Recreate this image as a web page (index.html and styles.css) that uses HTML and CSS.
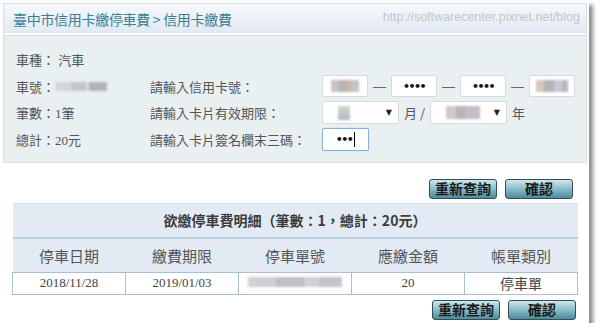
FILE: index.html
```html
<!DOCTYPE html>
<html>
    <head>
        <meta charset="utf-8">
        <title>信用卡繳費</title>
        <link rel="stylesheet" href="styles.css">
    </head>
    <body>
        <div class="shot">
            <div class="panel">
                <div class="panel-head">
                    <span class="crumb">臺中市信用卡繳停車費 &gt; 信用卡繳費</span>
                    <span class="mark">http://softwarecenter.pixnet.net/blog</span>
                </div>
                <div class="panel-body">
                    <div class="info">
                        <div class="cell">車種： 汽車</div>
                        <div class="cell"></div>
                        <div class="cell"></div>

                        <div class="cell">車號：<span class="blur blur-plate"></span></div>
                        <div class="cell">請輸入信用卡號：</div>
                        <div class="cell">
                            <span class="box"><span class="blur blur-a"></span></span>
                            <span class="dash">—</span>
                            <span class="box dots">••••</span>
                            <span class="dash">—</span>
                            <span class="box dots">••••</span>
                            <span class="dash">—</span>
                            <span class="box"><span class="blur blur-b"></span></span>
                        </div>

                        <div class="cell">筆數：1筆</div>
                        <div class="cell">請輸入卡片有效期限：</div>
                        <div class="cell">
                            <span class="sel"><span class="blur blur-m"></span><span class="arrow">▼</span></span>
                            <span class="unit">月 /</span>
                            <span class="sel"><span class="blur blur-y"></span><span class="arrow">▼</span></span>
                            <span class="unit">年</span>
                        </div>

                        <div class="cell">總計：20元</div>
                        <div class="cell">請輸入卡片簽名欄末三碼：</div>
                        <div class="cell">
                            <span class="box focus dots">•••<span class="caret"></span></span>
                        </div>
                    </div>
                </div>
            </div>

            <div class="actions top">
                <button class="btn">重新查詢</button>
                <button class="btn">確認</button>
            </div>

            <table class="bills">
                <tr class="title-row">
                    <th colspan="5">欲繳停車費明細（筆數：1，總計：20元）</th>
                </tr>
                <tr class="head-row">
                    <th>停車日期</th>
                    <th>繳費期限</th>
                    <th>停車單號</th>
                    <th>應繳金額</th>
                    <th>帳單類別</th>
                </tr>
                <tr class="data-row">
                    <td>2018/11/28</td>
                    <td>2019/01/03</td>
                    <td><span class="blur blur-no"></span></td>
                    <td>20</td>
                    <td class="kind">停車單</td>
                </tr>
            </table>

            <div class="actions bottom">
                <button class="btn">重新查詢</button>
                <button class="btn">確認</button>
            </div>
        </div>
    </body>
</html>
```
FILE: styles.css
```css
body {
    margin: 0;
    background: #fff;
    font-family: "Liberation Serif", "Noto Sans CJK TC", serif;
    color: #555;
}
.shot {
    width: 589px;
    height: 323px;
    padding: 3px 0 0 3px;
    box-sizing: border-box;
    background: #fff;
    box-shadow: 4px 5px 4px rgba(0, 0, 0, .45);
}
.panel {
    width: 584px;
    border: 1px solid #d9e0e3;
    box-sizing: border-box;
}
.panel-head {
    height: 29px;
    display: flex;
    justify-content: space-between;
    align-items: center;
    padding: 0 6px 0 9px;
    background: linear-gradient(#f7f9fb, #e0e9f2);
    border-bottom: 2px solid #fff;
}
.crumb {
    font-family: "Noto Sans CJK TC", sans-serif;
    font-size: 14px;
    color: #3a7f92;
    letter-spacing: -0.3px;
}
.mark {
    font-family: "Liberation Sans", sans-serif;
    font-size: 12.5px;
    color: #c2c6c9;
    margin-top: -4px;
}
.panel-body {
    background: #e9f0f2;
    border-top: 1px solid #d9e0e3;
    padding: 10px 0 9px 12px;
}
.info {
    display: grid;
    grid-template-columns: 134px 172px auto;
    grid-auto-rows: 26.7px;
    font-size: 13px;
}
.cell {
    display: flex;
    align-items: center;
    white-space: nowrap;
}
.blur {
    display: inline-block;
    height: 9px;
    filter: blur(1.2px);
}
.blur-plate {
    width: 52px;
    background: linear-gradient(90deg, #d6d6d8 0 30%, #c6c6ca 30% 60%, #ddd 60% 66%, #b4b4b8 66% 100%);
}
.blur-a {
    width: 28px;
    height: 12px;
    background: linear-gradient(90deg, #c8c2c4 0 30%, #b8b3b6 30% 55%, #c8b9ae 55% 75%, #c3c3ce 75%);
}
.blur-b {
    width: 32px;
    height: 12px;
    background: linear-gradient(90deg, #d6c6be 0 25%, #b5b1b8 25% 55%, #c8c8d2 55% 80%, #b8b8c0 80%);
}
.blur-m {
    width: 12px;
    height: 14px;
    background: linear-gradient(#cfd8c8, #b8b6c6);
}
.blur-y {
    width: 34px;
    height: 13px;
    background: linear-gradient(90deg, #d2c8c6 0 30%, #bcb2b8 30% 60%, #c4bcc8 60%);
}
.blur-no {
    width: 94px;
    height: 10px;
    background: linear-gradient(90deg, #d0d0d2 0 30%, #c0c0c4 30% 60%, #d2d2d4 60% 75%, #c4c4c8 75%);
}
.box {
    width: 46px;
    height: 22px;
    box-sizing: border-box;
    background: #fff;
    border: 1px solid #d6dadc;
    border-radius: 2px;
    display: inline-flex;
    align-items: center;
    justify-content: center;
}
.dots {
    font-family: "DejaVu Sans", sans-serif;
    font-size: 11px;
    font-weight: bold;
    color: #111;
    letter-spacing: -1.5px;
}
.dash {
    width: 23px;
    text-align: center;
    color: #666;
    font-family: "Liberation Sans", sans-serif;
    font-size: 13px;
}
.sel {
    width: 77px;
    height: 23px;
    box-sizing: border-box;
    background: #fff;
    border: 1px solid #d6dadc;
    border-radius: 2px;
    display: inline-flex;
    align-items: center;
    justify-content: space-between;
    padding: 0 6px 0 15px;
}
.arrow {
    font-family: "DejaVu Sans", sans-serif;
    font-size: 8px;
    color: #222;
}
.unit {
    padding: 0 5px 0 5px;
    font-family: "Noto Sans CJK TC", sans-serif;
}
.focus {
    width: 47px;
    height: 23px;
    border: 1px solid #8ab0e6;
    box-shadow: 0 0 1px #9bbcf0;
}
.caret {
    display: inline-block;
    width: 1px;
    height: 15px;
    margin-left: 2px;
    background: #000;
}
.actions {
    display: flex;
    justify-content: flex-end;
    gap: 8px;
}
.actions.top {
    width: 570px;
    margin-top: 16px;
}
.actions.bottom {
    width: 573px;
    margin-top: 5px;
}
.btn {
    width: 68px;
    height: 20px;
    padding: 0;
    border: 1px solid #2f4e58;
    border-radius: 3px;
    background: linear-gradient(#d2e7ec, #8fbfcb 45%, #4d8b9b);
    font-family: "Noto Sans CJK TC", sans-serif;
    font-size: 14px;
    font-weight: bold;
    line-height: 17px;
    color: #1a1a1a;
}
.bills {
    width: 566px;
    margin: 4px 0 0 9px;
    border-collapse: collapse;
    table-layout: fixed;
}
.title-row th {
    height: 33px;
    background: #e2ebf4;
    border-top: 1px solid #d3dfe9;
    border-bottom: 2px solid #bccfe0;
    font-family: "Noto Sans CJK TC", serif;
    font-size: 14px;
    font-weight: bold;
    color: #3b3b3b;
    padding: 0;
}
.head-row th {
    height: 33px;
    background: #e2ebf4;
    font-family: "Noto Sans CJK TC", sans-serif;
    font-size: 15px;
    font-weight: normal;
    color: #555;
    padding: 0;
}
.data-row td {
    height: 21px;
    border: 1px solid #a9bfd3;
    text-align: center;
    font-size: 13px;
    color: #444;
    padding: 0;
}
.data-row .kind {
    font-family: "Noto Sans CJK TC", sans-serif;
    font-size: 14px;
}
```
